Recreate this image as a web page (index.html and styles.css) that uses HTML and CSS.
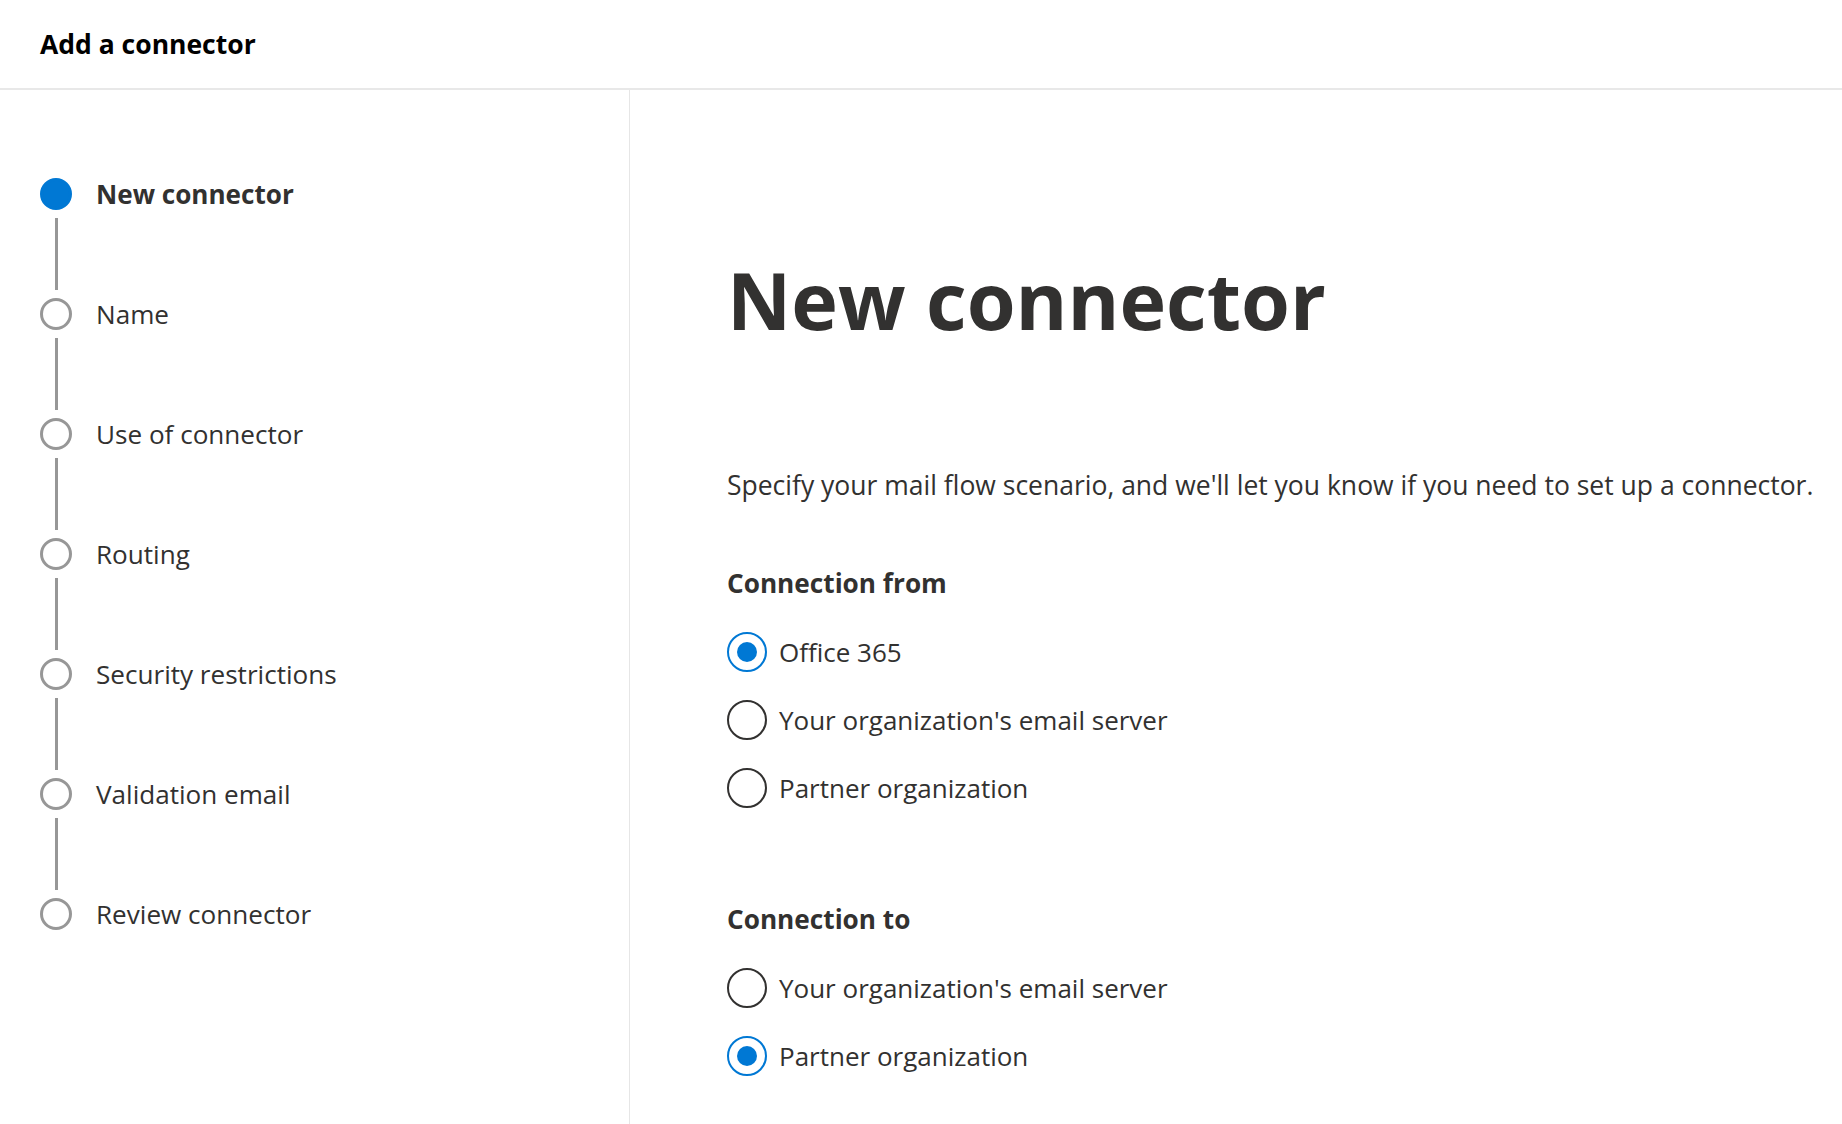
FILE: index.html
```html
<!DOCTYPE html>
<html lang="en">
<head>
<meta charset="utf-8">
<title>Add a connector</title>
<link rel="stylesheet" href="styles.css">
</head>
<body>
<header class="topbar">
  <h1 class="topbar-title">Add a connector</h1>
</header>
<div class="layout">
  <nav class="steps">
    <div class="step step-current">
      <span class="step-dot"></span>
      <span class="step-label">New connector</span>
    </div>
    <div class="step-line"></div>
    <div class="step">
      <span class="step-dot"></span>
      <span class="step-label">Name</span>
    </div>
    <div class="step-line"></div>
    <div class="step">
      <span class="step-dot"></span>
      <span class="step-label">Use of connector</span>
    </div>
    <div class="step-line"></div>
    <div class="step">
      <span class="step-dot"></span>
      <span class="step-label">Routing</span>
    </div>
    <div class="step-line"></div>
    <div class="step">
      <span class="step-dot"></span>
      <span class="step-label">Security restrictions</span>
    </div>
    <div class="step-line"></div>
    <div class="step">
      <span class="step-dot"></span>
      <span class="step-label">Validation email</span>
    </div>
    <div class="step-line"></div>
    <div class="step">
      <span class="step-dot"></span>
      <span class="step-label">Review connector</span>
    </div>
  </nav>
  <main class="content">
    <h2 class="page-title">New connector</h2>
    <p class="description">Specify your mail flow scenario, and we'll let you know if you need to set up a connector.</p>

    <h3 class="group-title">Connection from</h3>
    <div class="radio-group">
      <label class="radio radio-checked"><span class="radio-circle"></span><span class="radio-label">Office 365</span></label>
      <label class="radio"><span class="radio-circle"></span><span class="radio-label">Your organization's email server</span></label>
      <label class="radio"><span class="radio-circle"></span><span class="radio-label">Partner organization</span></label>
    </div>

    <h3 class="group-title group-title-second">Connection to</h3>
    <div class="radio-group">
      <label class="radio"><span class="radio-circle"></span><span class="radio-label">Your organization's email server</span></label>
      <label class="radio radio-checked"><span class="radio-circle"></span><span class="radio-label">Partner organization</span></label>
    </div>
  </main>
</div>
</body>
</html>
```

FILE: styles.css
```css
* {
  box-sizing: border-box;
}

html, body {
  margin: 0;
  padding: 0;
  background: #ffffff;
}

body {
  font-family: "Open Sans", "Noto Sans", "Liberation Sans", sans-serif;
  color: #323130;
  width: 1842px;
  height: 1124px;
  overflow: hidden;
}

.topbar {
  height: 90px;
  border-bottom: 2px solid #e8e8e8;
  display: flex;
  align-items: center;
  padding-left: 40px;
}

.topbar-title {
  margin: 0;
  font-size: 26.5px;
  font-weight: 700;
  color: #000000;
  line-height: 1;
}

.layout {
  display: flex;
  height: 1034px;
}

.steps {
  width: 630px;
  flex: 0 0 630px;
  border-right: 1px solid #e6e6e6;
  padding: 88px 0 0 40px;
  display: flex;
  flex-direction: column;
}

.step {
  display: flex;
  align-items: center;
  height: 32px;
}

.step-dot {
  width: 32px;
  height: 32px;
  border-radius: 50%;
  border: 3px solid #979797;
  flex: 0 0 32px;
}

.step-current .step-dot {
  background: #0078d4;
  border-color: #0078d4;
}

.step-label {
  margin-left: 24px;
  font-size: 26.1px;
  color: #323130;
  white-space: nowrap;
}

.step-current .step-label {
  font-weight: 700;
}

.step-line {
  width: 3px;
  height: 72px;
  margin: 8px 0 8px 14.5px;
  background: #979797;
}

.content {
  flex: 1;
  padding: 160px 0 0 97px;
}

.page-title {
  margin: 0;
  font-size: 79px;
  line-height: 100px;
  font-weight: 700;
  color: #323130;
}

.description {
  margin: 115px 0 0 0;
  font-size: 26.5px;
  line-height: 40px;
  white-space: nowrap;
}

.group-title {
  margin: 58px 0 0 0;
  font-size: 26.2px;
  line-height: 40px;
  font-weight: 700;
}

.group-title-second {
  margin-top: 91px;
}

.radio-group {
  margin-top: 29px;
  display: flex;
  flex-direction: column;
  gap: 28px;
}

.radio {
  display: flex;
  align-items: center;
  height: 40px;
}

.radio-circle {
  width: 40px;
  height: 40px;
  flex: 0 0 40px;
  border-radius: 50%;
  border: 2px solid #323130;
  display: flex;
  align-items: center;
  justify-content: center;
}

.radio-checked .radio-circle {
  border-color: #0078d4;
}

.radio-checked .radio-circle::after {
  content: "";
  width: 20px;
  height: 20px;
  border-radius: 50%;
  background: #0078d4;
}

.radio-label {
  margin-left: 12px;
  font-size: 26px;
  white-space: nowrap;
}
```
